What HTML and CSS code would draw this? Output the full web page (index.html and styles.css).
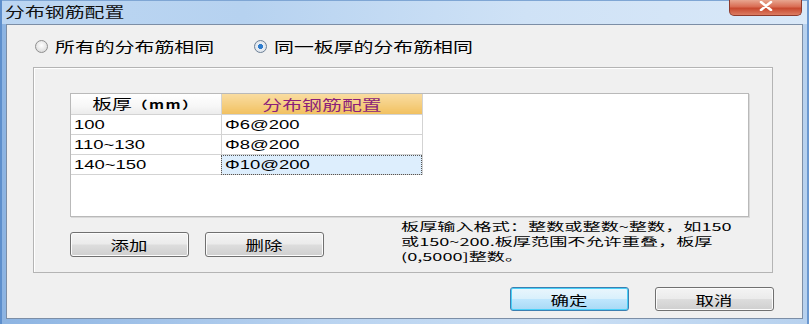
FILE: index.html
```html
<!DOCTYPE html>
<html lang="zh-CN">
<head>
    <meta charset="UTF-8">
    <title>分布钢筋配置</title>
    <link rel="stylesheet" href="styles.css">
</head>
<body>
    <div class="window">
        <div class="titlebar">
            <span class="title sx">分布钢筋配置</span>
            <span class="close-btn">
                <svg width="16" height="10" viewBox="0 0 16 10">
                    <path d="M3 1 L13 9 M13 1 L3 9" stroke="#fff" stroke-width="2.6" stroke-linecap="round"/>
                </svg>
            </span>
        </div>

        <div class="client">
            <!-- mode choice -->
            <div class="radios">
                <label class="radio first"><span class="dot"></span><span class="sx">所有的分布筋相同</span></label>
                <label class="radio checked"><span class="dot"></span><span class="sx">同一板厚的分布筋相同</span></label>
            </div>

            <div class="group">
                <div class="grid">
                    <table>
                        <tr>
                            <th class="col-thick"><span class="sx-c">板厚<small>（mm）</small></span></th>
                            <th class="col-rebar"><span class="sx-c">分布钢筋配置</span></th>
                        </tr>
                        <tr>
                            <td><span class="sx">100</span></td>
                            <td><span class="sx">Φ6@200</span></td>
                        </tr>
                        <tr>
                            <td><span class="sx">110~130</span></td>
                            <td><span class="sx">Φ8@200</span></td>
                        </tr>
                        <tr>
                            <td><span class="sx">140~150</span></td>
                            <td class="selected"><span class="sx">Φ10@200</span></td>
                        </tr>
                    </table>
                </div>

                <div class="group-foot">
                    <button class="btn"><span class="sx-c">添加</span></button>
                    <button class="btn"><span class="sx-c">删除</span></button>
                    <p class="hint">
                        <span class="sx">板厚输入格式：整数或整数~整数，如150</span>
                        <span class="sx">或150~200.板厚范围不允许重叠，板厚</span>
                        <span class="sx">(0,5000]整数。</span>
                    </p>
                </div>
            </div>

            <div class="actions">
                <button class="btn default"><span class="sx-c">确定</span></button>
                <button class="btn"><span class="sx-c">取消</span></button>
            </div>
        </div>
    </div>
</body>
</html>
```

FILE: styles.css
```css
/* Base */
* {
    box-sizing: border-box;
    margin: 0;
    padding: 0;
}

body {
    width: 809px;
    height: 324px;
    overflow: hidden;
    font-family: 'Noto Sans CJK SC', 'Liberation Sans', sans-serif;
    font-size: 14px;
    color: #000;
    background: #a9c7ea;
}

/* the screenshot is stretched sideways, text follows it */
.sx {
    display: inline-block;
    transform: scaleX(1.42);
    transform-origin: 0 50%;
    white-space: nowrap;
}

.sx-c {
    display: inline-block;
    transform: scaleX(1.42);
    transform-origin: 50% 50%;
    white-space: nowrap;
}

/* Window frame */
.window {
    width: 809px;
    height: 324px;
    display: flex;
    flex-direction: column;
    background: linear-gradient(90deg, #8db4e2 0%, #b9d3f0 40%, #c9def4 70%, #b7d1ee 100%);
    border-left: 2px solid #5e8fcc;
    border-right: 2px solid #6b98d0;
}

.titlebar {
    height: 24px;
    display: flex;
    align-items: flex-start;
    padding-left: 3px;
    padding-right: 5px;
    border-top: 1px solid #7fa6d4;
    background: linear-gradient(90deg, #bcd6f2 0%, #b6d2f0 30%, #cfe2f6 65%, #d9e8f8 100%);
}

.title {
    font-size: 14px;
    line-height: 20px;
    color: #111;
}

.close-btn {
    margin-left: auto;
    margin-top: -1px;
    width: 73px;
    height: 16px;
    display: flex;
    align-items: center;
    justify-content: center;
    border: 1px solid #8e3a2c;
    border-top: none;
    border-radius: 0 0 5px 5px;
    background: linear-gradient(180deg, #e8a690 0%, #d96c53 45%, #c8492f 55%, #dc7c62 100%);
}

.close-btn svg {
    margin-top: -3px;
}

/* Client area */
.client {
    flex: 1;
    margin: 0 4px 5px 4px;
    background: #f0f0f0;
    border: 1px solid #7c8ea6;
    display: flex;
    flex-direction: column;
}

.radios {
    display: flex;
    align-items: center;
    height: 16px;
    margin-top: 13px;
    padding-left: 28px;
}

.radio {
    display: flex;
    align-items: center;
    gap: 7px;
    font-size: 14px;
}

.radio.first {
    width: 219px;
}

.dot {
    width: 13px;
    height: 13px;
    border-radius: 50%;
    border: 1px solid #8f8f8f;
    background: radial-gradient(circle at 50% 40%, #ffffff 0%, #e4e4e4 60%, #cfcfcf 100%);
    flex-shrink: 0;
}

.radio.checked .dot {
    background: radial-gradient(circle at 50% 50%, #2a7bd0 0%, #2f7ccc 30%, #e8eef5 36%, #d9dde2 100%);
    border-color: #6b7f96;
}

/* Group box */
.group {
    margin: 13px 0 0 26px;
    width: 740px;
    height: 206px;
    border: 1px solid #b4b4b4;
    box-shadow: inset 1px 1px 0 #ffffff;
    padding: 25px 0 0 36px;
}

.grid {
    width: 679px;
    height: 124px;
    background: #fff;
    border: 1px solid #b9b9b9;
    box-shadow: 1px 1px 0 #d9d9d9;
}

table {
    border-collapse: collapse;
    font-family: 'Liberation Sans', 'Noto Sans CJK SC', sans-serif;
    font-size: 13px;
}

th, td {
    height: 20px;
    border: 1px solid #d3d3d3;
    border-top: none;
    text-align: left;
    font-weight: normal;
    padding: 0 0 0 3px;
}

th {
    text-align: center;
    padding: 0;
    font-family: 'Noto Sans CJK SC', sans-serif;
    font-size: 14px;
    line-height: 19px;
}

th small {
    font-size: 11px;
    font-weight: bold;
    letter-spacing: 1px;
}

.col-thick {
    width: 150px;
    border-left: none;
    background: linear-gradient(180deg, #ffffff 0%, #f7f7f7 60%, #ececec 100%);
}

.col-rebar {
    width: 201px;
    color: #8b1f7a;
    background: linear-gradient(180deg, #f9dca0 0%, #f5cf82 50%, #f1c060 100%);
}

td:first-child {
    border-left: none;
}

td.selected {
    background: #ddeefd;
    outline: 1px dotted #555;
    outline-offset: -1px;
}

/* Buttons */
.btn {
    width: 119px;
    height: 25px;
    border: 1px solid #707070;
    border-radius: 3px;
    background: linear-gradient(180deg, #f4f4f4 0%, #ebebeb 48%, #dddddd 52%, #cfcfcf 100%);
    box-shadow: inset 0 0 0 1px #fcfcfc;
    font-family: 'Noto Sans CJK SC', sans-serif;
    font-size: 13px;
    color: #000;
}

.btn.default {
    border-color: #3c7fb1;
    background: linear-gradient(180deg, #eaf6fd 0%, #d9f0fc 48%, #bee6fd 52%, #a7d9f5 100%);
    box-shadow: inset 0 0 0 1px #48d0f8;
}

.group-foot {
    display: flex;
    align-items: flex-start;
    margin-top: 2px;
}

.group-foot .btn {
    margin-top: 13px;
}

.group-foot .btn + .btn {
    margin-left: 16px;
}

.hint {
    margin-left: 77px;
    display: flex;
    flex-direction: column;
    font-size: 11px;
    line-height: 15px;
}

.hint .sx {
    transform: scaleX(1.65);
}

/* Dialog actions */
.actions {
    display: flex;
    justify-content: flex-end;
    gap: 26px;
    margin: 14px 28px 0 0;
}

.actions .btn {
    height: 24px;
}
```
